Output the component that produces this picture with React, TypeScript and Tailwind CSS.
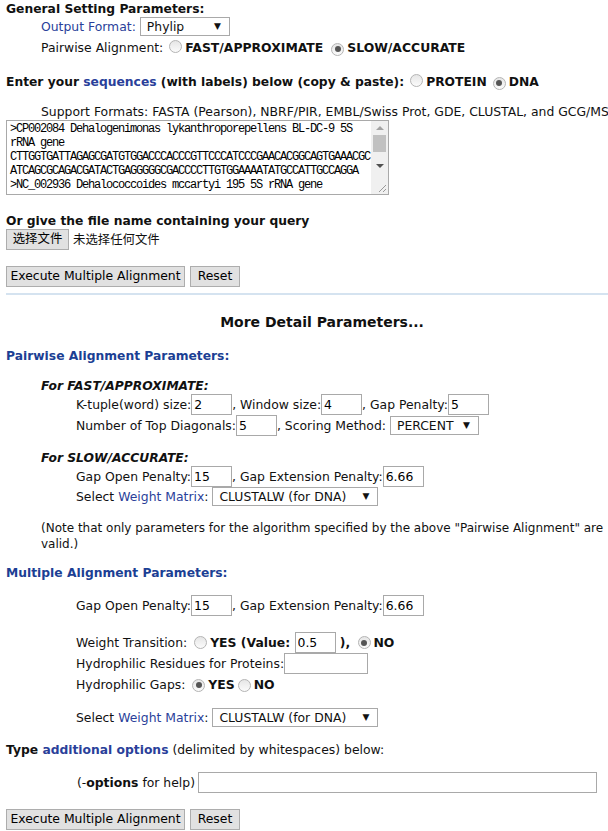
import React from 'react';

const LINK = 'text-[#2a3f9a]';
const HEAD = 'font-bold text-[12.3px]';

function Radio({ checked }: { checked?: boolean }) {
  return (
    <span className="inline-flex items-center justify-center w-[13px] h-[13px] rounded-full border border-[#b4b4b4] bg-gradient-to-b from-[#e6e6e6] to-[#fbfbfb] align-[-1px] mx-[3px]">
      {checked && <span className="w-[6px] h-[6px] rounded-full bg-[#555]" />}
    </span>
  );
}

function Field({ value = '', w = 'w-[41px]' }: { value?: string; w?: string }) {
  return (
    <input
      readOnly
      value={value}
      className={`${w} h-[21px] border border-[#a9a9a9] px-[2px] text-[12.4px] text-black align-middle outline-none`}
    />
  );
}

function Select({ label, w }: { label: string; w: string }) {
  return (
    <span className={`${w} inline-flex items-center justify-between h-[19px] border border-[#a9a9a9] bg-white pl-[6px] pr-[8px] align-middle`}>
      <span>{label}</span>
      <span className="text-[9px] leading-none">▼</span>
    </span>
  );
}

function Btn({ children, w }: { children: React.ReactNode; w: string }) {
  return (
    <button className={`${w} h-[21px] border border-[#adadad] bg-[#e1e1e1] text-[12.4px] text-black leading-none whitespace-nowrap px-0`}>
      {children}
    </button>
  );
}

function Row({ children, h = 'h-[21px]' }: { children: React.ReactNode; h?: string }) {
  return <div className={`pl-[70px] ${h} flex items-center whitespace-nowrap`}>{children}</div>;
}

const seq = [
  '>CP002084 Dehalogenimonas lykanthroporepellens BL-DC-9 5S',
  'rRNA gene',
  'CTTGGTGATTAGAGCGATGTGGACCCACCCGTTCCCATCCCGAACACGGCAGTGAAACGC',
  'ATCAGCGCAGACGATACTGAGGGGGCGACCCCTTGTGGAAAATATGCCATTGCCAGGA',
  '>NC_002936 Dehalococcoides mccartyi 195 5S rRNA gene',
];

export default function App() {
  return (
    <div className="w-[608px] h-[831px] overflow-hidden bg-white">
      <div
        className="w-[632px] ml-[6px] pt-[2px] text-[12.4px] leading-[16px] text-[#111]"
        style={{ fontFamily: '"DejaVu Sans", Verdana, "Noto Sans CJK SC", sans-serif' }}
      >
        <div className={`${HEAD} leading-[14px]`}>General Setting Parameters:</div>
        <div className="pl-[35px]">
          <div className="h-[21px] flex items-center gap-[4px]">
            <span className={LINK}>Output Format:</span>
            <Select label="Phylip" w="w-[90px]" />
          </div>
          <div className="h-[21px] flex items-center">
            <span>Pairwise Alignment:</span>
            <span className="ml-[3px]"><Radio /></span>
            <b>FAST/APPROXIMATE</b>
            <span className="ml-[5px]"><Radio checked /></span>
            <b>SLOW/ACCURATE</b>
          </div>
        </div>

        <div className={`mt-[13px] h-[21px] flex items-center whitespace-nowrap ${HEAD}`}>
          <span>Enter your&nbsp;</span>
          <span className={LINK}>sequences</span>
          <span>&nbsp;(with labels) below (copy &amp; paste):</span>
          <span className="ml-[3px]"><Radio /></span>
          <span>PROTEIN</span>
          <span className="ml-[3px]"><Radio checked /></span>
          <span>DNA</span>
        </div>

        <div className="mt-[12px] pl-[35px] whitespace-nowrap">
          Support Formats: FASTA (Pearson), NBRF/PIR, EMBL/Swiss Prot, GDE, CLUSTAL, and GCG/MSF
        </div>

        <div className="w-[383px] h-[75px] border border-[#a9a9a9] flex">
          <div
            className="flex-1 pl-[3px] pt-[1px] text-[12px] leading-[14px] tracking-[-1.2px] text-black whitespace-pre overflow-hidden"
            style={{ fontFamily: '"Liberation Mono", "DejaVu Sans Mono", monospace' }}
          >
            {seq.map((l) => (
              <div key={l}>{l}</div>
            ))}
          </div>
          <div className="w-[17px] bg-[#f0f0f0] flex flex-col items-center relative">
            <span className="mt-[5px] w-0 h-0 border-x-[4px] border-x-transparent border-b-[4px] border-b-[#a3a3a3]" />
            <span className="mt-[5px] w-[13px] h-[17px] bg-[#c1c1c1]" />
            <span className="mt-[12px] w-0 h-0 border-x-[4px] border-x-transparent border-t-[4px] border-t-[#505050]" />
            <svg className="absolute right-[1px] bottom-[1px]" width="9" height="9" viewBox="0 0 9 9">
              <path d="M8 1 L1 8 M8 5 L5 8" stroke="#999" strokeWidth="1" />
            </svg>
          </div>
        </div>

        <div className={`mt-[18px] ${HEAD}`}>Or give the file name containing your query</div>
        <div className="h-[21px] flex items-center">
          <Btn w="w-[63px]">选择文件</Btn>
          <span className="ml-[4px]">未选择任何文件</span>
        </div>

        <div className="mt-[16px] flex gap-[5px]">
          <Btn w="w-[179px]">Execute Multiple Alignment</Btn>
          <Btn w="w-[50px]">Reset</Btn>
        </div>

        <div className="mt-[6px] h-[2px] bg-[#d5e3f0]" />

        <div className="mt-[19px] text-center font-bold text-[14px]">More Detail Parameters...</div>

        <div className={`mt-[18px] ${HEAD} text-[#1c3f94]`}>Pairwise Alignment Parameters:</div>

        <div className={`mt-[14px] pl-[35px] italic ${HEAD}`}>For FAST/APPROXIMATE:</div>
        <Row>
          K-tuple(word) size:<Field value="2" />, Window size:<Field value="4" />, Gap Penalty:<Field value="5" />
        </Row>
        <Row>
          Number of Top Diagonals:<Field value="5" />, Scoring Method:&nbsp;<Select label="PERCENT" w="w-[89px]" />
        </Row>

        <div className={`mt-[14px] pl-[35px] italic ${HEAD}`}>For SLOW/ACCURATE:</div>
        <Row>
          Gap Open Penalty:<Field value="15" />, Gap Extension Penalty:<Field value="6.66" />
        </Row>
        <Row h="h-[19px]">
          Select&nbsp;<span className={LINK}>Weight Matrix</span>:&nbsp;<Select label="CLUSTALW (for DNA)" w="w-[166px]" />
        </Row>

        <div className="mt-[14px] pl-[35px] text-[12px]">
          (Note that only parameters for the algorithm specified by the above "Pairwise Alignment" are valid.)
        </div>

        <div className={`mt-[13px] ${HEAD} text-[#1c3f94]`}>Multiple Alignment Parameters:</div>

        <div className="mt-[14px]">
          <Row>
            Gap Open Penalty:<Field value="15" />, Gap Extension Penalty:<Field value="6.66" />
          </Row>
        </div>
        <div className="mt-[16px]">
          <Row>
            Weight Transition:&nbsp;<Radio />
            <b>YES (Value:&nbsp;</b>
            <Field value="0.5" />
            <b>&nbsp;),&nbsp;</b>
            <Radio checked />
            <b>NO</b>
          </Row>
          <Row>
            Hydrophilic Residues for Proteins:<Field w="w-[84px]" />
          </Row>
          <Row h="h-[22px]">
            Hydrophilic Gaps:&nbsp;<Radio checked />
            <b>YES</b>
            <Radio />
            <b>NO</b>
          </Row>
        </div>
        <div className="mt-[11px]">
          <Row>
            Select&nbsp;<span className={LINK}>Weight Matrix</span>:&nbsp;<Select label="CLUSTALW (for DNA)" w="w-[166px]" />
          </Row>
        </div>

        <div className="mt-[14px] whitespace-nowrap">
          <span className={HEAD}>Type </span>
          <span className={`${LINK} ${HEAD}`}>additional options</span> (delimited by whitespaces) below:
        </div>

        <div className="mt-[14px] h-[21px] flex items-center">
          <span className="w-[192px] text-right pr-[3px]">
            (-<b>options</b> for help)
          </span>
          <Field w="w-[399px]" />
        </div>

        <div className="mt-[16px] flex gap-[5px]">
          <Btn w="w-[179px]">Execute Multiple Alignment</Btn>
          <Btn w="w-[50px]">Reset</Btn>
        </div>
      </div>
    </div>
  );
}
